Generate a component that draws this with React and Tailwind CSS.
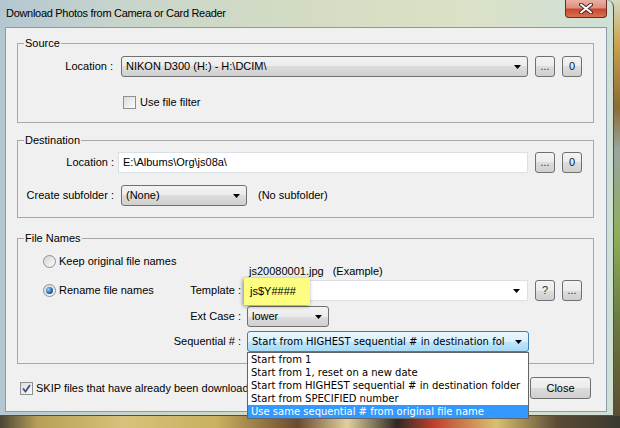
import React from "react";

function Arrow() {
  return (
    <svg width="7" height="4" viewBox="0 0 7 4">
      <path d="M0 0H7L3.5 4Z" fill="#000" />
    </svg>
  );
}

function Combo({ className, children }) {
  return (
    <div
      className={`flex items-center h-[21px] rounded-[3px] border border-[#707070] bg-[linear-gradient(#f3f3f3_0%,#ebebeb_50%,#dddddd_50%,#cfcfcf_100%)] pl-[4px] pr-[6px] ${className}`}
    >
      <span className="flex-1 truncate">{children}</span>
      <Arrow />
    </div>
  );
}

function SmallButton({ children, className }) {
  return (
    <div
      className={`flex items-center justify-center w-[20px] h-[21px] rounded-[3px] border border-[#707070] bg-[linear-gradient(#f3f3f3_0%,#ebebeb_50%,#dddddd_50%,#cfcfcf_100%)] text-[11px] ${className}`}
    >
      {children}
    </div>
  );
}

function Checkbox({ checked }) {
  return (
    <div className="flex items-center justify-center w-[13px] h-[13px] border border-[#8e8f8f] bg-[linear-gradient(135deg,#dcdcdc,#fbfbfb)]">
      {checked && (
        <svg width="9" height="9" viewBox="0 0 9 9">
          <path d="M1 4.5L3.5 7.5L8 1" stroke="#3b4f8f" strokeWidth="1.8" fill="none" />
        </svg>
      )}
    </div>
  );
}

function Radio({ checked }) {
  return (
    <div className="flex items-center justify-center w-[13px] h-[13px] rounded-full border border-[#8e8f8f] bg-[linear-gradient(135deg,#d6d6d6,#fbfbfb)]">
      {checked && (
        <div className="w-[7px] h-[7px] rounded-full bg-[radial-gradient(circle_at_35%_35%,#9fd2ff,#1c5fa8_60%,#0d3f7a)]" />
      )}
    </div>
  );
}

function Group({ title, className, children }) {
  return (
    <div className={`relative w-[577px] border border-[#a8a8a8] ${className}`}>
      <span className="absolute -top-[7px] left-[6px] bg-[#f0f0f0] px-[1px] leading-[12px]">
        {title}
      </span>
      {children}
    </div>
  );
}

export default function App() {
  const items = [
    "Start from 1",
    "Start from 1, reset on a new date",
    "Start from HIGHEST sequential # in destination folder",
    "Start from SPECIFIED number",
    "Use same sequential # from original file name",
  ];

  return (
    <div className="w-[620px] h-[428px] overflow-hidden bg-[linear-gradient(#d3d9bf_0%,#c9a452_10%,#8a6b35_25%,#9aa4a0_35%,#8fae5c_55%,#6b7a40_75%,#5a4630_100%)] font-['Liberation_Sans',Arial,sans-serif] text-[11px] text-black">
      {/* window */}
      <div className="w-[614px] h-[416px] rounded-tr-[7px] border-r border-b border-[#42525a] bg-[linear-gradient(90deg,#b4c7d1_0%,#c8d5cc_20%,#d2dbc3_45%,#dbe1c6_75%,#cfe0d8_100%)]">
        {/* title bar */}
        <div className="flex h-[27px] justify-between">
          <div className="pl-[6px] pt-[6px] text-[11px] tracking-[-0.3px] leading-[14px]">
            Download Photos from Camera or Card Reader
          </div>
          <div className="mr-[6px] flex items-center justify-center w-[42px] h-[18px] rounded-b-[4px] border border-t-0 border-[#6a2a1f] bg-[linear-gradient(#eab0a2_0%,#df8f7e_45%,#c9472f_55%,#d9724f_100%)]">
            <svg width="14" height="11" viewBox="0 0 14 11">
              <path d="M2 1.5L12 9.5M12 1.5L2 9.5" stroke="#4a2a26" strokeWidth="4" strokeLinecap="round" />
              <path d="M2 1.5L12 9.5M12 1.5L2 9.5" stroke="#ffffff" strokeWidth="2" strokeLinecap="round" />
            </svg>
          </div>
        </div>

        {/* client area */}
        <div className="ml-[5px] w-[602px] h-[385px] border border-[#8b9ba4] bg-[#f0f0f0] pl-[11px] pt-[15px]">
          {/* Source */}
          <Group title="Source" className="h-[80px] pt-[12px]">
            <div className="flex items-center">
              <span className="w-[95px] text-right">Location :</span>
              <Combo className="ml-[8px] w-[407px]">NIKON D300 (H:) - H:\DCIM\</Combo>
              <SmallButton className="ml-[7px] text-[#800000]">...</SmallButton>
              <SmallButton className="ml-[7px] text-[#101040] text-[10px]">0</SmallButton>
            </div>
            <div className="mt-[17px] ml-[105px] flex items-center">
              <Checkbox />
              <span className="ml-[4px]">Use file filter</span>
            </div>
          </Group>

          {/* Destination */}
          <Group title="Destination" className="mt-[17px] h-[78px] pt-[11px]">
            <div className="flex items-center">
              <span className="w-[96px] text-right">Location :</span>
              <div className="ml-[4px] flex items-center w-[410px] h-[21px] border border-[#dbdfe6] bg-white pl-[4px]">
                E:\Albums\Org\js08a\
              </div>
              <SmallButton className="ml-[7px] text-[#800000]">...</SmallButton>
              <SmallButton className="ml-[7px] text-[#101040] text-[10px]">0</SmallButton>
            </div>
            <div className="mt-[12px] flex items-center">
              <span className="w-[96px] text-right">Create subfolder :</span>
              <Combo className="ml-[7px] w-[126px]">(None)</Combo>
              <span className="ml-[11px]">(No subfolder)</span>
            </div>
          </Group>

          {/* File Names */}
          <Group title="File Names" className="mt-[20px] h-[126px] pt-[16px]">
            <div className="flex items-center h-[13px] pl-[25px]">
              <Radio />
              <span className="ml-[3px]">Keep original file names</span>
            </div>
            <div className="-mt-[3px] h-[12px] leading-[12px] pl-[231px]">
              <span>js20080001.jpg</span>
              <span className="ml-[9px]">(Example)</span>
            </div>
            <div className="mt-[3px] flex items-center">
              <div className="w-[150px] shrink-0 flex items-center pl-[25px] whitespace-nowrap">
                <Radio checked />
                <span className="ml-[3px]">Rename file names</span>
              </div>
              <span className="w-[73px] text-right">Template :</span>
              <div className="relative ml-[6px] flex items-center w-[281px] h-[21px] border border-[#dbdfe6] bg-white pr-[7px]">
                <div className="absolute -left-[4px] -top-[3px] w-[66px] h-[27px] flex items-center pl-[6px] bg-[#fdfd82] shadow-[-1px_1px_4px_rgba(0,0,0,0.45)]">
                  js$Y####
                </div>
                <span className="flex-1" />
                <Arrow />
              </div>
              <SmallButton className="ml-[7px] text-[#333]">?</SmallButton>
              <SmallButton className="ml-[7px] text-[#800000]">...</SmallButton>
            </div>
            <div className="mt-[5px] flex items-center">
              <span className="w-[223px] text-right">Ext Case :</span>
              <Combo className="ml-[6px] w-[82px]">lower</Combo>
            </div>
            <div className="mt-[4px] flex items-center">
              <span className="w-[223px] text-right">Sequential # :</span>
              <div className="relative ml-[6px] w-[282px]">
                <div className="flex items-center h-[21px] rounded-[3px] border border-[#3c7fb1] bg-[linear-gradient(#eaf6fd_0%,#d9f0fc_50%,#bee6fd_50%,#a7d9f5_100%)] pl-[4px] pr-[6px] font-['DejaVu_Sans',Verdana,sans-serif] text-[10px]">
                  <span className="flex-1 truncate">Start from HIGHEST sequential # in destination fol</span>
                  <Arrow />
                </div>
                <div className="absolute left-0 top-full z-10 w-[282px] border border-[#646464] bg-white font-['DejaVu_Sans',Verdana,sans-serif] text-[10px]">
                  {items.map((t, i) => (
                    <div
                      key={t}
                      className={`h-[13px] leading-[13px] pl-[3px] whitespace-nowrap ${
                        i === 4 ? "bg-[#3399ff] text-white" : ""
                      }`}
                    >
                      {t}
                    </div>
                  ))}
                </div>
              </div>
            </div>
          </Group>

          {/* bottom row */}
          <div className="mt-[13px] flex items-center h-[22px] w-[577px] pr-[3px]">
            <div className="ml-[3px]">
              <Checkbox checked />
            </div>
            <span className="ml-[3px] whitespace-nowrap">SKIP files that have already been downloaded</span>
            <div className="ml-auto flex items-center justify-center w-[61px] h-[22px] rounded-[3px] border border-[#707070] bg-[linear-gradient(#f3f3f3_0%,#ebebeb_50%,#dddddd_50%,#cfcfcf_100%)]">
              Close
            </div>
          </div>
        </div>
      </div>

      {/* photo strip below the window */}
      <div className="h-[12px] bg-[linear-gradient(90deg,#4a4536_0%,#b79f58_6%,#d6c27a_20%,#c9b060_35%,#6a4a30_48%,#e0d0a0_56%,#2e2a24_64%,#c04030_70%,#d8c070_80%,#5a4a34_90%,#3a3a30_100%)]" />
    </div>
  );
}
